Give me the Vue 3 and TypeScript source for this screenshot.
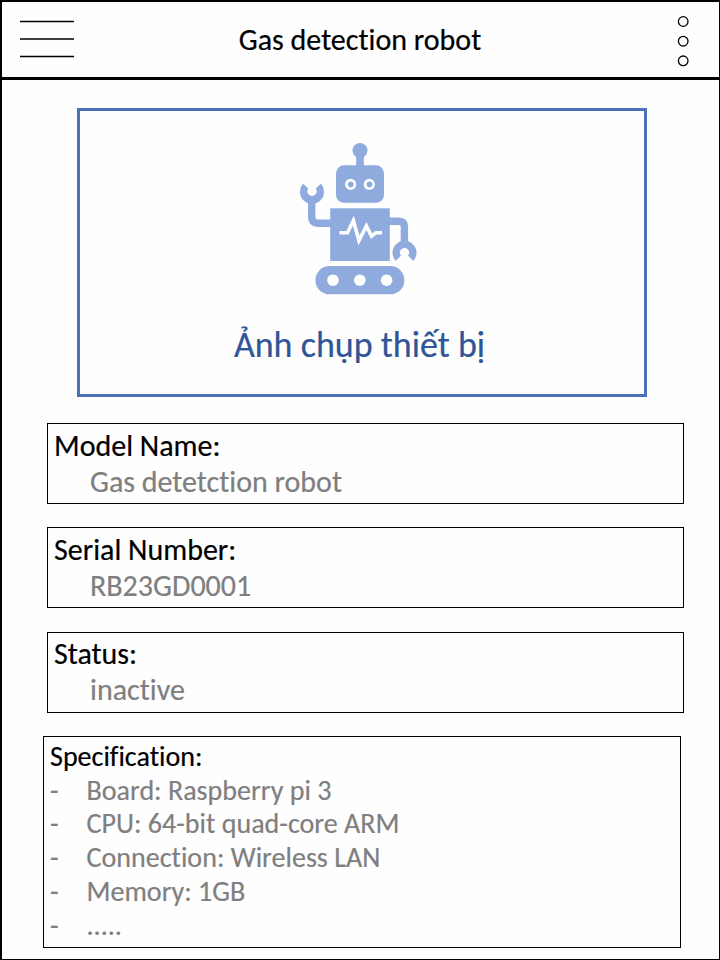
<script setup lang="ts">
interface Field {
  label: string
  value: string
  cls: string
}

const fields: Field[] = [
  { label: 'Model Name:', value: 'Gas detetction robot', cls: 'model' },
  { label: 'Serial Number:', value: 'RB23GD0001', cls: 'serial' },
  { label: 'Status:', value: 'inactive', cls: 'status' },
]

const specs: string[] = [
  'Board: Raspberry pi 3',
  'CPU: 64-bit quad-core ARM',
  'Connection: Wireless LAN',
  'Memory: 1GB',
  '.....',
]
</script>

<template>
  <div class="screen">
    <header class="bar">
      <svg class="menu" viewBox="0 0 54 40" aria-hidden="true">
        <path d="M0 3.5H54M0 21H54M0 38.5H54" />
      </svg>
      <h1 class="title">Gas detection robot</h1>
      <svg class="more" viewBox="0 0 12 52" aria-hidden="true">
        <circle cx="6.2" cy="6.5" r="4.8" />
        <circle cx="6.2" cy="26.2" r="4.8" />
        <circle cx="6.2" cy="45.8" r="4.8" />
      </svg>
    </header>

    <section class="photo">
      <svg class="robot" viewBox="290 135 140 165" aria-hidden="true">
        <g class="solid">
          <circle cx="360" cy="150.5" r="7.5" />
          <rect x="356.2" y="154" width="7.6" height="14" />
          <rect x="336" y="165.3" width="48" height="37.5" rx="8" />
          <rect x="330.2" y="208.3" width="59.6" height="52.7" />
          <rect x="315.4" y="266" width="89" height="28.3" rx="14.15" />
          <path d="M303.2 183.7A12 12 0 1 0 320.8 183.7L315.8 188.6A4.6 4.6 0 1 1 308.2 188.6Z" />
          <path d="M395.8 261A12 12 0 1 1 413.2 261L408 255.6A4.6 4.6 0 1 0 401 255.6Z" />
        </g>
        <path class="arm" d="M311.7 201V217Q311.7 223.2 318 223.2H331M389 221.3H398.5Q404.4 221.3 404.4 227V243" />
        <g class="hole">
          <circle cx="350.6" cy="184.4" r="5.6" />
          <circle cx="369.3" cy="184.4" r="5.6" />
          <circle cx="333" cy="280.2" r="5.8" />
          <circle cx="359.8" cy="280.2" r="5.8" />
          <circle cx="386.6" cy="280.2" r="5.8" />
        </g>
        <g class="solid">
          <circle cx="350.8" cy="184.4" r="2.8" />
          <circle cx="369.5" cy="184.4" r="2.8" />
        </g>
        <path class="pulse" d="M339.5 232.7H347.5L353.4 220.5L358.9 240.5L366.4 226L371.6 236.2L376 232.7H382" />
      </svg>
      <p class="caption">Ảnh chụp thiết bị</p>
    </section>

    <main class="details">
      <section v-for="f in fields" :key="f.label" class="field" :class="f.cls">
        <div class="label">{{ f.label }}</div>
        <div class="value">{{ f.value }}</div>
      </section>
      <section class="spec">
        <div class="label">Specification:</div>
        <ul>
          <li v-for="(s, i) in specs" :key="i">
            <span class="dash">-</span><span>{{ s }}</span>
          </li>
        </ul>
      </section>
    </main>
  </div>
</template>

<style>
body {
  margin: 0;
  background: #fff;
}
</style>

<style scoped>
.screen {
  box-sizing: border-box;
  width: 720px;
  height: 960px;
  border: solid #000;
  border-width: 2px 1px 1px 2px;
  background: #fefefe;
  color: #000;
  font-family: Carlito, Calibri, Lato, "Liberation Sans", sans-serif;
  font-size: 30px;
  font-variant-ligatures: none;
  -webkit-text-stroke: 0.2px currentColor;
  white-space: nowrap;
  overflow: hidden;
}
.bar {
  box-sizing: border-box;
  height: 78px;
  border-bottom: 3px solid #000;
  display: grid;
  grid-template-columns: 54px 1fr 54px;
  align-items: start;
  padding: 13px 18px 0 18px;
}
.menu {
  width: 54px;
  height: 40px;
  margin-top: 3px;
  fill: none;
  stroke: #000;
  stroke-width: 1.5;
}
.title {
  margin: 7px 1px 0 0;
  font: inherit;
  line-height: 36px;
  text-align: center;
}
.more {
  width: 12px;
  height: 52px;
  margin-left: 30px;
  fill: none;
  stroke: #000;
  stroke-width: 1.3;
}
.photo {
  box-sizing: border-box;
  width: 570px;
  height: 289px;
  margin: 28px 0 0 75px;
  border: 3px solid #4a72b8;
  display: flex;
  flex-direction: column;
  align-items: center;
  padding-top: 24px;
}
.robot {
  width: 140px;
  height: 165px;
  margin-right: 4px;
}
.solid {
  fill: #8faadc;
}
.hole {
  fill: #fff;
}
.arm {
  fill: none;
  stroke: #8faadc;
  stroke-width: 7.4;
}
.pulse {
  fill: none;
  stroke: #fff;
  stroke-width: 3.6;
}
.caption {
  margin: 24px 5px 0 0;
  color: #2f5597;
  font-size: 36px;
  line-height: 42px;
}
.details {
  padding: 26px 0 0 45px;
}
.field {
  box-sizing: border-box;
  width: 637px;
  height: 81px;
  border: 1px solid #000;
  padding: 4px 0 0 6px;
  margin-bottom: 23px;
  line-height: 36px;
}
.field.serial {
  margin-bottom: 24px;
}
.field.status {
  padding-top: 3px;
}
.value {
  padding-left: 36px;
  color: #7f7f7f;
}
.spec {
  box-sizing: border-box;
  width: 638px;
  height: 212px;
  margin-left: -4px;
  border: 1px solid #000;
  padding: 3px 0 0 6px;
  font-size: 28.05px;
  line-height: 33.7px;
}
.spec ul {
  list-style: none;
  margin: 0;
  padding: 0;
  color: #7f7f7f;
}
.spec li {
  display: flex;
}
.dash {
  width: 36.5px;
}
</style>
